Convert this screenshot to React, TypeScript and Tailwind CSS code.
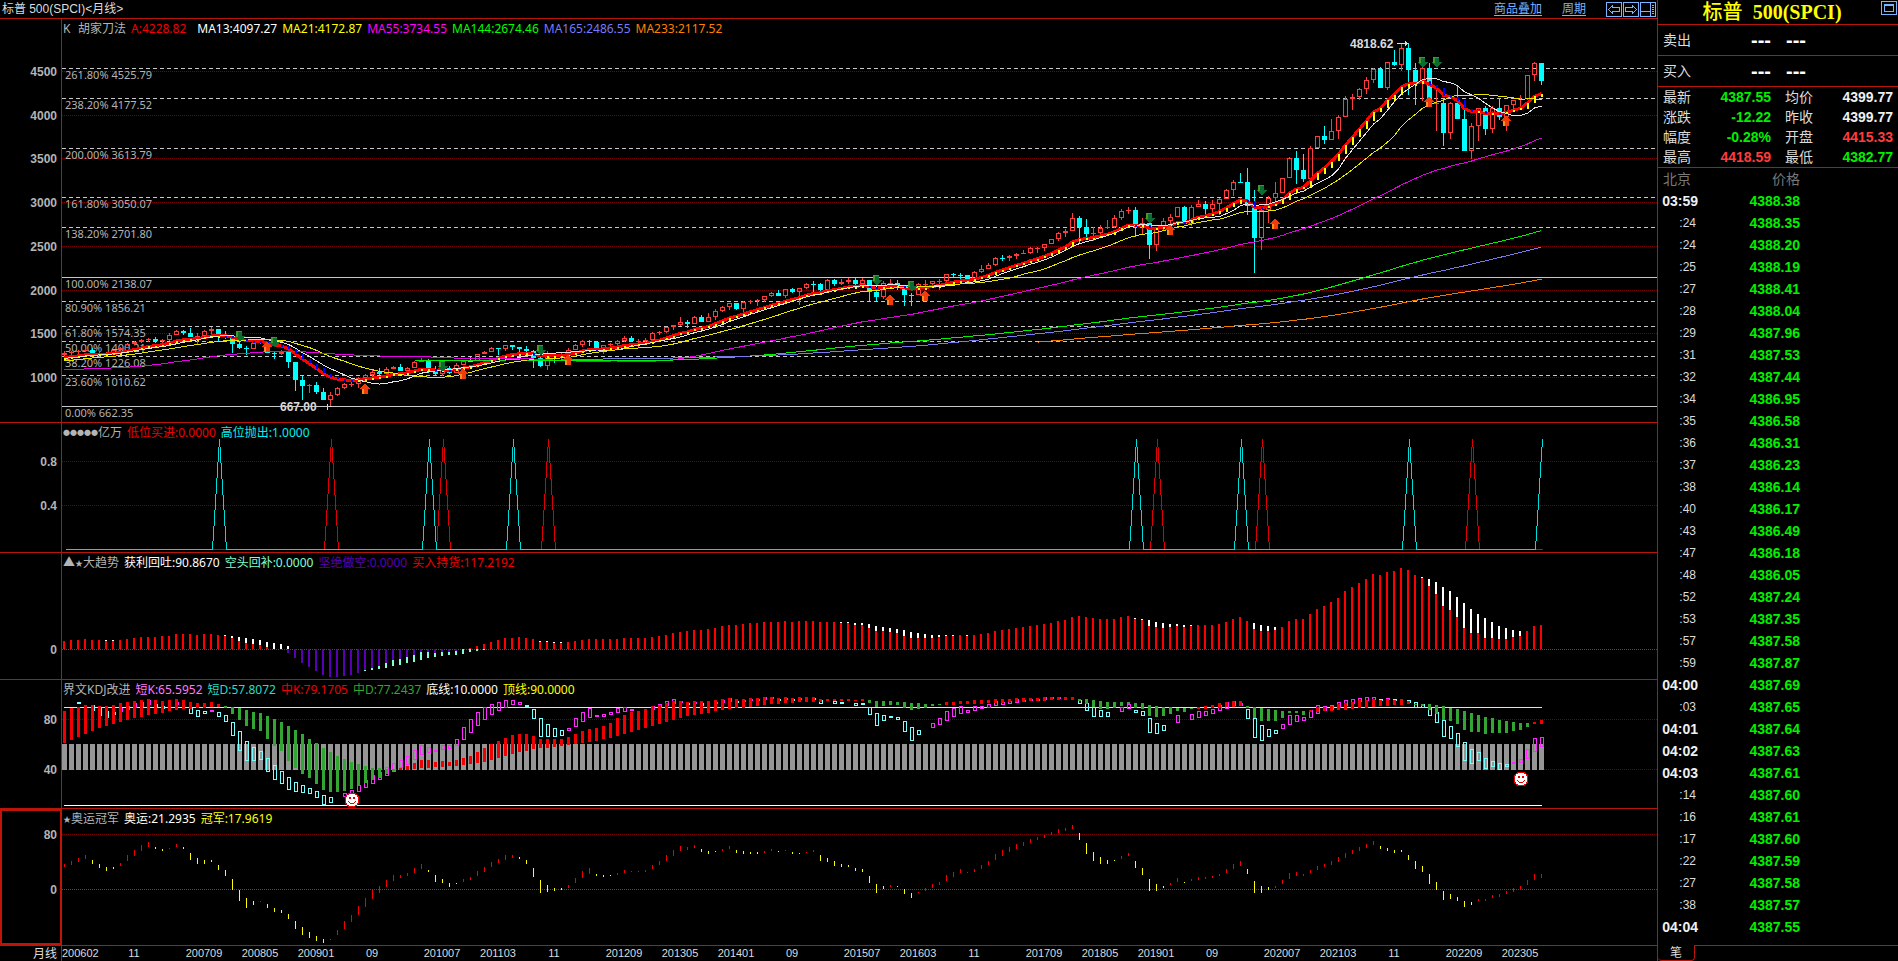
import React from 'react';
import clsx from 'clsx';

type Candle = { o: number; h: number; l: number; c: number };

const STEP = 7;
const FIRST_BAR = 93; // 93 months of history before the first visible bar

// monthly closes 1998-04 .. 2005-12, only used to warm up the averages
const HISTORY = [
  1111.75, 1090.82, 1133.84, 1120.67, 957.28, 1017.01, 1098.67, 1163.63, 1229.23,
  1279.64, 1238.33, 1286.37, 1335.18, 1301.84, 1372.71, 1328.72, 1320.41, 1282.71, 1362.93, 1388.91, 1469.25,
  1394.46, 1366.42, 1498.58, 1452.43, 1420.6, 1454.6, 1430.83, 1517.68, 1436.51, 1429.4, 1314.95, 1320.28,
  1366.01, 1239.94, 1160.33, 1249.46, 1255.82, 1224.42, 1211.23, 1133.58, 1040.94, 1059.78, 1139.45, 1148.08,
  1130.2, 1106.73, 1147.39, 1076.92, 1067.14, 989.82, 911.62, 916.07, 815.28, 885.76, 936.31, 879.82,
  855.7, 841.15, 848.18, 916.92, 963.59, 974.5, 990.31, 1008.01, 995.97, 1050.71, 1058.2, 1111.92,
  1131.13, 1144.94, 1126.21, 1107.3, 1120.68, 1140.84, 1101.72, 1104.24, 1114.58, 1130.2, 1173.82, 1211.92,
  1181.27, 1203.6, 1180.59, 1156.85, 1191.5, 1191.33, 1234.18, 1220.33, 1228.81, 1207.01, 1249.48, 1248.29,
];

// high, low, close for every visible month, one line per half year
const MONTHS = [
  1294.9, 1245.7, 1280.1, 1297.6, 1253.6, 1280.7, 1310.9, 1268.4, 1294.8, 1318.2, 1280.7, 1310.6, 1326.7, 1245.3, 1270.1, 1290.7, 1219.3, 1270.2,
  1280.4, 1224.5, 1276.7, 1306.7, 1261.3, 1303.8, 1340.3, 1290.9, 1335.9, 1389.5, 1327.1, 1377.9, 1407.9, 1361, 1400.6, 1431.8, 1385.9, 1418.3,
  1441.6, 1404, 1438.2, 1461.6, 1389.4, 1406.8, 1438.9, 1364, 1420.9, 1498, 1416.4, 1482.4, 1535.6, 1476.7, 1530.6, 1540.6, 1484.2, 1503.4,
  1555.9, 1454.3, 1455.3, 1503.9, 1370.6, 1474, 1538.7, 1439.3, 1526.8, 1576.1, 1489.6, 1549.4, 1545.8, 1406.1, 1481.1, 1523.6, 1435.7, 1468.4,
  1472, 1270.1, 1378.6, 1396, 1316.8, 1330.6, 1359.7, 1257, 1322.7, 1404.6, 1324.4, 1385.6, 1440.2, 1373.1, 1400.4, 1404.1, 1272, 1280,
  1292.2, 1200.4, 1267.4, 1313.2, 1247.5, 1282.8, 1303, 1106.4, 1166.4, 1167, 839.8, 968.8, 1007.5, 741, 896.2, 918.9, 815.7, 903.3,
  943.9, 804.3, 825.9, 875, 734.5, 735.1, 833, 667, 797.9, 888.7, 783.3, 872.8, 930.2, 866.1, 919.1, 956.2, 888.9, 919.3,
  996.7, 869.3, 987.5, 1039.5, 978.5, 1020.6, 1080.2, 992, 1057.1, 1101.4, 1020, 1036.2, 1113.7, 1029.4, 1095.6, 1130.4, 1085.9, 1115.1,
  1150.5, 1071.6, 1073.9, 1112.4, 1044.5, 1104.5, 1180.7, 1105.4, 1169.4, 1219.8, 1170.7, 1186.7, 1205.1, 1040.8, 1089.4, 1131.2, 1028.3, 1030.7,
  1121, 1010.9, 1101.6, 1129.2, 1039.7, 1049.3, 1157.2, 1049.7, 1141.2, 1196.1, 1131.9, 1183.3, 1227.1, 1173, 1180.6, 1262.6, 1186.6, 1257.6,
  1302.7, 1257.6, 1286.1, 1344.1, 1289.1, 1327.2, 1332.3, 1249.1, 1325.8, 1364.6, 1294.7, 1363.6, 1370.6, 1311.8, 1345.2, 1345.2, 1258.1, 1320.6,
  1356.5, 1282.9, 1292.3, 1307.4, 1101.5, 1218.9, 1229.3, 1114.2, 1131.4, 1292.7, 1074.8, 1253.3, 1277.6, 1158.7, 1247, 1269.4, 1202.4, 1257.6,
  1333.5, 1258.9, 1312.4, 1378, 1312.5, 1365.7, 1419.2, 1340, 1408.5, 1422.4, 1357.4, 1397.9, 1415.3, 1292, 1310.3, 1363.5, 1266.7, 1362.2,
  1391.7, 1325.4, 1379.3, 1426.7, 1354.7, 1406.6, 1474.5, 1396.6, 1440.7, 1471, 1403.3, 1412.2, 1434.3, 1343.4, 1416.2, 1448, 1398.1, 1426.2,
  1509.9, 1426.2, 1498.1, 1530.9, 1485, 1514.7, 1570.3, 1501.5, 1569.2, 1597.6, 1536, 1597.6, 1687.2, 1581.3, 1630.7, 1654.2, 1560.3, 1606.3,
  1698.8, 1604.6, 1685.7, 1709.7, 1627.5, 1633, 1729.9, 1633.4, 1681.6, 1775.2, 1646.5, 1756.5, 1813.6, 1746.2, 1805.8, 1849.4, 1768, 1848.4,
  1850.8, 1770.5, 1782.6, 1867.9, 1737.9, 1859.5, 1884, 1834.4, 1872.3, 1897.3, 1814.4, 1884, 1924, 1859.8, 1923.6, 1968.2, 1916, 1960.2,
  1991.4, 1930.7, 1930.7, 2005, 1904.8, 2003.4, 2019.3, 1964, 1972.3, 2018.2, 1820.7, 2018.1, 2075.8, 2001, 2067.6, 2093.6, 1972.6, 2058.9,
  2072.4, 1988.1, 1995, 2119.6, 1980.9, 2104.5, 2117.5, 2039.7, 2067.9, 2125.9, 2048.4, 2085.5, 2134.7, 2067.9, 2107.4, 2130, 2056.3, 2063.1,
  2132.8, 2044, 2103.8, 2112.7, 1867, 1972.2, 2020.9, 1871.9, 1920, 2094.3, 1893.7, 2079.4, 2116.5, 2019.4, 2080.4, 2104.3, 1993.3, 2043.9,
  2038.2, 1812.3, 1940.2, 1963, 1810.1, 1932.2, 2072.2, 1937.1, 2059.7, 2111.1, 2033.8, 2065.3, 2103.5, 2025.9, 2097, 2120.6, 1991.7, 2098.9,
  2177.1, 2074, 2173.6, 2193.8, 2147.6, 2171, 2187.9, 2119.1, 2168.3, 2169.6, 2114.7, 2126.2, 2214.1, 2083.8, 2198.8, 2277.5, 2187.4, 2238.8,
  2301, 2245.1, 2278.9, 2371.5, 2271.7, 2363.6, 2401, 2322.3, 2362.7, 2398.2, 2329, 2384.2, 2418.7, 2352.7, 2411.8, 2453.8, 2405.7, 2423.4,
  2484, 2407.7, 2470.3, 2490.9, 2417.4, 2471.7, 2519.4, 2446.6, 2519.4, 2583, 2520.4, 2575.3, 2657.7, 2557.5, 2647.6, 2695, 2605.5, 2673.6,
  2872.9, 2682.4, 2823.8, 2836, 2532.7, 2713.8, 2801.9, 2585.9, 2640.9, 2717.5, 2553.8, 2648.1, 2742.2, 2594.6, 2705.3, 2791.5, 2692, 2718.4,
  2848, 2699, 2816.3, 2916.5, 2796.3, 2901.5, 2940.9, 2864.1, 2914, 2939.9, 2603.5, 2711.7, 2815.2, 2631.1, 2760.2, 2800.2, 2346.6, 2506.9,
  2709, 2444, 2704.1, 2813.5, 2681.8, 2784.5, 2860.3, 2722.3, 2834.4, 2949.5, 2848.6, 2945.8, 2954.1, 2750.5, 2752.1, 2964.2, 2728.8, 2941.8,
  3028, 2952.2, 2980.4, 3013.6, 2822.1, 2926.5, 3022, 2891.9, 2976.7, 3050.1, 2855.9, 3037.6, 3154.3, 3050.7, 3141, 3247.9, 3070.3, 3230.8,
  3337.8, 3214.6, 3225.5, 3393.5, 2855.8, 2954.2, 3136.7, 2191.9, 2584.6, 2954.9, 2447.5, 2912.4, 3068.7, 2766.6, 3044.3, 3233.1, 2966, 3100.3,
  3280, 3101.2, 3271.1, 3514.8, 3284.5, 3500.3, 3588.1, 3209.5, 3363, 3549.9, 3233.9, 3270, 3646, 3279.7, 3621.6, 3760.2, 3633.4, 3756.1,
  3870.9, 3662.7, 3714.2, 3950.4, 3725.6, 3811.2, 3994.4, 3723.3, 3972.9, 4218.8, 3992.8, 4181.2, 4238, 4056.9, 4204.1, 4302.4, 4164.4, 4297.5,
  4430, 4233.1, 4395.3, 4537.4, 4367.7, 4522.7, 4545.9, 4305.9, 4307.5, 4608.1, 4278.9, 4605.4, 4743.8, 4560, 4567, 4808.9, 4495.1, 4766.2,
  4818.6, 4222.6, 4515.6, 4595.3, 4114.7, 4373.9, 4637.3, 4157.9, 4530.4, 4593.5, 4124.3, 4131.9, 4307.7, 3810.3, 4132.2, 4177.5, 3636.9, 3785.4,
  4140.2, 3721.6, 4130.3, 4325.3, 3954.5, 3955, 4119.3, 3584.1, 3585.6, 3905.4, 3491.6, 3872, 4080.1, 3698.2, 4080.1, 4101, 3764.5, 3839.5,
  4094.2, 3794.3, 4076.6, 4195.4, 3943.1, 3970.2, 4110.8, 3808.9, 4109.3, 4170.1, 4049.4, 4169.5, 4231.1, 4048.3, 4179.8, 4458.5, 4171.6, 4450.4,
  4607.1, 4385, 4589, 4578.8, 4335, 4387.6,
];

const ALL: Candle[] = HISTORY.map((c, i) => ({ o: HISTORY[i - 1] ?? c, h: c, l: c, c }));
for (let i = 0; i < MONTHS.length; i += 3) {
  ALL.push({ o: ALL[ALL.length - 1].c, h: MONTHS[i], l: MONTHS[i + 1], c: MONTHS[i + 2] });
}
const BARS = ALL.slice(FIRST_BAR);
const CLOSES = ALL.map((b) => b.c);

// fast / slow line of the last panel, in pixels above zero (55px = 80)
const OLYMPIC = [
  25, 22, 28, 24, 31, 27, 34, 30, 25, 29, 21, 25, 18, 22, 20, 22, 26, 23, 34, 28, 39, 33, 44, 38, 47, 42, 40, 42, 38, 40, 41, 40,
  45, 42, 40, 42, 29, 36, 25, 31, 25, 29, 27, 29, 19, 24, 13, 19, -1, 10, -12, -1, -19, -9, -16, -12, -12, -13, -19, -15, -23, -19,
  -24, -21, -30, -25, -40, -32, -46, -38, -49, -43, -52, -47, -54, -50, -50, -51, -41, -46, -32, -40, -26, -33, -17, -26, -9, -18,
  -1, -10, 3, -4, 9, 2, 14, 8, 14, 11, 16, 13, 21, 16, 25, 20, 17, 19, 7, 14, 6, 10, 2, 6, 5, 6, 10, 7, 12, 9, 18, 13, 22, 17,
  27, 22, 30, 26, 34, 29, 34, 31, 30, 32, 25, 29, 12, 21, -4, 9, -3, 4, -2, 1, -1, 1, 4, 1, 11, 6, 18, 11, 21, 15, 13, 15, 12, 14,
  13, 14, 16, 14, 19, 16, 18, 17, 18, 17, 19, 17, 24, 20, 28, 24, 34, 28, 39, 33, 43, 38, 42, 39, 44, 41, 37, 40, 35, 38, 37, 38,
  40, 38, 43, 40, 36, 39, 35, 38, 35, 37, 35, 37, 38, 36, 40, 38, 37, 38, 39, 38, 35, 37, 35, 36, 37, 36, 39, 37, 28, 34, 27, 31,
  23, 28, 22, 25, 22, 24, 18, 21, 17, 20, 6, 13, -4, 5, 0, 3, 4, 2, 2, 3, -5, 0, -9, -4, -3, -4, 1, -2, 5, 1, 7, 4, 14, 8, 17, 12,
  20, 16, 17, 16, 20, 17, 24, 20, 28, 24, 35, 29, 39, 33, 42, 37, 45, 40, 47, 43, 50, 46, 52, 49, 54, 51, 57, 54, 60, 56, 61, 58,
  64, 60, 49, 56, 35, 46, 28, 37, 25, 32, 25, 29, 28, 29, 33, 30, 36, 33, 21, 28, 14, 21, -2, 10, -2, 5, 1, 3, 6, 4, 11, 7, 6, 7,
  10, 8, 12, 9, 12, 10, 13, 11, 15, 13, 20, 16, 25, 20, 28, 23, 15, 20, -4, 8, -4, 3, -1, 2, 3, 1, 9, 5, 16, 10, 17, 13, 15, 13,
  19, 16, 23, 19, 25, 22, 28, 24, 32, 27, 36, 31, 39, 35, 42, 38, 45, 41, 48, 44, 40, 43, 38, 41, 36, 39, 37, 39, 29, 34, 20, 28,
  17, 23, 5, 15, -1, 7, -11, -2, -10, -5, -12, -8, -18, -12, -16, -13, -10, -12, -10, -12, -6, -9, -5, -8, -2, -5, 1, -3, 3, -1,
  9, 4, 15, 9, 15, 11,
];

function ma(n: number) {
  return CLOSES.map((_, i) => (i < n - 1 ? NaN : CLOSES.slice(i - n + 1, i + 1).reduce((a, b) => a + b, 0) / n));
}

// x = (src + (n - 1) * prev) / n
function smooth(src: number[], n: number) {
  const out: number[] = [];
  src.forEach((v, i) => out.push(i === 0 ? v : out[i - 1] + (v - out[i - 1]) / n));
  return out;
}

function kd(n: number, m1: number, m2: number) {
  const rsv = ALL.map((b, i) => {
    const win = ALL.slice(Math.max(0, i - n + 1), i + 1);
    const hi = Math.max(...win.map((w) => w.h));
    const lo = Math.min(...win.map((w) => w.l));
    return hi === lo ? 50 : ((b.c - lo) / (hi - lo)) * 100;
  });
  const k = smooth(rsv, m1);
  return { k: k.slice(FIRST_BAR), d: smooth(k, m2).slice(FIRST_BAR) };
}

const MA13 = ma(13).slice(FIRST_BAR);
const MA21 = ma(21).slice(FIRST_BAR);
const MA55 = ma(55).slice(FIRST_BAR);
const MA144 = ma(144).slice(FIRST_BAR);
const MA165 = ma(165).slice(FIRST_BAR);
const MA233 = ma(233).slice(FIRST_BAR);
const LINE_A = smooth(CLOSES, 6);

const ema12 = smooth(CLOSES, 6.5);
const ema26 = smooth(CLOSES, 13.5);
const difAll = ema12.map((v, i) => v - ema26[i]);
const DIF = difAll.slice(FIRST_BAR);
const DEA = smooth(difAll, 5).slice(FIRST_BAR);

const SHORT = kd(25, 3, 3);
const MID = kd(55, 5, 10);

const FIB: [string, number][] = [
  ['261.80% 4525.79', 4525.79],
  ['238.20% 4177.52', 4177.52],
  ['200.00% 3613.79', 3613.79],
  ['161.80% 3050.07', 3050.07],
  ['138.20% 2701.80', 2701.8],
  ['100.00% 2138.07', 2138.07],
  ['80.90% 1856.21', 1856.21],
  ['61.80% 1574.35', 1574.35],
  ['50.00% 1400.21', 1400.21],
  ['38.20% 1226.08', 1226.08],
  ['23.60% 1010.62', 1010.62],
  ['0.00% 662.35', 662.35],
];

// [bar, top of the arrow]
const SELLS = [[25, 312], [30, 318], [54, 342], [68, 326], [116, 256], [121, 262], [155, 194], [171, 166], [194, 38], [196, 38]];
const BUYS = [[29, 322], [43, 364], [57, 349], [72, 335], [118, 275], [123, 271], [158, 205], [173, 199], [195, 77], [206, 96]];

const PEAKS_HIGH = [22, 52, 64, 153, 168, 192, 211];
const PEAKS_LOW = [38, 54, 69, 156, 171, 201];

const DATES: [number, string][] = [
  [10, '11'], [20, '200709'], [28, '200805'], [36, '200901'], [44, '09'], [54, '201007'], [62, '201103'], [70, '11'],
  [80, '201209'], [88, '201305'], [96, '201401'], [104, '09'], [114, '201507'], [122, '201603'], [130, '11'],
  [140, '201709'], [148, '201805'], [156, '201901'], [164, '09'], [174, '202007'], [182, '202103'], [190, '11'],
  [200, '202209'], [208, '202305'],
];

const STATS = [
  ['最新', '4387.55', 'g', '均价', '4399.77', 'w'],
  ['涨跌', '-12.22', 'g', '昨收', '4399.77', 'w'],
  ['幅度', '-0.28%', 'g', '开盘', '4415.33', 'r'],
  ['最高', '4418.59', 'r', '最低', '4382.77', 'g'],
];

const TICKS = [
  ['03:59', '4388.38'], [':24', '4388.35'], [':24', '4388.20'], [':25', '4388.19'], [':27', '4388.41'], [':28', '4388.04'],
  [':29', '4387.96'], [':31', '4387.53'], [':32', '4387.44'], [':34', '4386.95'], [':35', '4386.58'], [':36', '4386.31'],
  [':37', '4386.23'], [':38', '4386.14'], [':40', '4386.17'], [':43', '4386.49'], [':47', '4386.18'], [':48', '4386.05'],
  [':52', '4387.24'], [':53', '4387.35'], [':57', '4387.58'], [':59', '4387.87'], ['04:00', '4387.69'], [':03', '4387.65'],
  ['04:01', '4387.64'], ['04:02', '4387.63'], ['04:03', '4387.61'], [':14', '4387.60'], [':16', '4387.61'], [':17', '4387.60'],
  [':22', '4387.59'], [':27', '4387.58'], [':38', '4387.57'], ['04:04', '4387.55'],
];

const priceY = (p: number) => 358 - (p - 1000) * 0.08743;
const kdY = (v: number) => Math.round(125 - (v - 10) * 1.225);
const barX = (i: number) => i * STEP;

function linePoints(values: number[]) {
  return values
    .map((v, i) => (Number.isNaN(v) ? '' : `${barX(i) + 2.5},${priceY(v).toFixed(1)}`))
    .filter(Boolean)
    .join(' ');
}

type Tick = { y: number; label: string };

type PanelProps = {
  height: string;
  ticks: Tick[];
  selected?: boolean;
  brightZero?: boolean;
  legend: React.ReactNode;
  children: React.ReactNode;
};

function Panel({ height, ticks, selected, brightZero, legend, children }: PanelProps) {
  return (
    <section className={clsx('flex border-b border-[#b9140a]', height)}>
      <div className={clsx('w-[62px] shrink-0', selected ? 'border-2 border-[#c01408]' : 'border-r border-[#b9140a]')}>
        <svg className="block w-full h-full overflow-visible">
          {ticks.map((t) => (
            <text
              key={t.label}
              x={selected ? 55 : 57}
              y={selected ? t.y + 3 : t.y + 5}
              textAnchor="end"
              className="fill-[#b4b4b4] font-bold text-xs font-['Liberation_Sans',sans-serif]"
            >
              {t.label}
            </text>
          ))}
        </svg>
      </div>
      <div className="relative flex-1 min-w-0">
        <svg className="block w-full h-full" shapeRendering="crispEdges">
          {ticks.map((t) => (
            <line
              key={t.label}
              x1="0"
              x2="100%"
              y1={t.y + 0.5}
              y2={t.y + 0.5}
              stroke={brightZero && t.label === '0' ? '#be1e14' : '#780000'}
              strokeDasharray="1 1"
            />
          ))}
          {children}
        </svg>
        <div className="absolute left-0 top-0 h-5 pl-px flex items-center gap-[5px] text-xs whitespace-nowrap">
          {legend}
        </div>
      </div>
    </section>
  );
}

function SellArrow({ bar, y }: { bar: number; y: number }) {
  return (
    <g transform={`translate(${barX(bar) - 3} ${y})`}>
      <path d="M2 0h6v5h3l-5 5-6-5h2z" fill="#0a6e32" />
      <path d="M2 0h6v1H4v5H2z" fill="#4b9628" />
    </g>
  );
}

function BuyArrow({ bar, y }: { bar: number; y: number }) {
  return (
    <g transform={`translate(${barX(bar) - 3} ${y})`}>
      <path d="M5 0l5 6H8v5H2V6H0z" fill="#f03c0a" />
      <path d="M2 6h2v5H2z" fill="#ff8c1e" />
    </g>
  );
}

function Smiley({ bar, y }: { bar: number; y: number }) {
  return (
    <g transform={`translate(${barX(bar) + 3} ${y})`}>
      <circle r="7" fill="#fff" stroke="#f00000" />
      <path d="M-3-3h2v2h-2zM1-3h2v2H1z" fill="#e00000" />
      <path d="M-4 1l2 2h4l2-2" fill="none" stroke="#e00000" />
    </g>
  );
}

function PriceChart() {
  return (
    <>
      {FIB.map(([label, p]) => {
        const y = Math.floor(priceY(p) - 0.4) + 0.5;
        const solid = label.startsWith('100') || label.startsWith('0.00');
        return (
          <g key={label}>
            <text x="3" y={y + 10} className="fill-[#b4b4b4] text-[11px]">
              {label}
            </text>
            {label.startsWith('0.00') && (
              <text x="218" y={y + 4} className="fill-[#dcdcdc] text-xs font-bold font-['Liberation_Sans',sans-serif]">
                667.00
              </text>
            )}
            <line x1="0" x2="100%" y1={y} y2={y} stroke="#c8c8c8" strokeDasharray={solid ? undefined : '4 3'} />
          </g>
        );
      })}
      <path d="M265.5 385v2M266.5 387.5h3M265.5 388v3" stroke="#dcdcdc" fill="none" />
      <text x="1288" y="29" className="fill-[#dcdcdc] text-xs font-bold font-['Liberation_Sans',sans-serif]">
        4818.62
      </text>
      <path d="M1335 24.5h11M1343.5 22v5M1344.5 23v3" stroke="#dcdcdc" fill="none" />

      {BARS.map((b, i) => {
        const x = barX(i);
        const up = b.c >= b.o;
        const top = Math.round(priceY(Math.max(b.o, b.c)));
        const bottom = Math.max(top + 1, Math.round(priceY(Math.min(b.o, b.c))));
        const high = Math.round(priceY(b.h));
        const low = Math.max(bottom, Math.round(priceY(b.l)));
        const color = up ? '#ff3c3c' : '#00ffff';
        return (
          <g key={i} fill={color}>
            <rect x={x + 2} y={high} width="1" height={Math.max(0, top - high)} />
            <rect x={x + 2} y={bottom} width="1" height={low - bottom} />
            {up && bottom - top > 2 ? (
              <rect x={x + 0.5} y={top + 0.5} width="4" height={bottom - top - 1} fill="none" stroke={color} />
            ) : (
              <rect x={x} y={top} width="5" height={bottom - top} />
            )}
          </g>
        );
      })}

      <g fill="none">
        <polyline points={linePoints(LINE_A.slice(FIRST_BAR))} stroke="#ff0000" strokeWidth="3" />
        <polyline points={linePoints(MA13)} stroke="#e6e6e6" />
        <polyline points={linePoints(MA21)} stroke="#e6e600" />
        <polyline points={linePoints(MA55)} stroke="#e600e6" />
        <polyline points={linePoints(MA144)} stroke="#00f000" />
        <polyline points={linePoints(MA165)} stroke="#7878f0" />
        <polyline points={linePoints(MA233)} stroke="#f07800" />
      </g>
      {BARS.map((_, i) => {
        const now = LINE_A[FIRST_BAR + i];
        const prev = LINE_A[FIRST_BAR + i - 1];
        const y1 = priceY(Math.max(now, prev));
        const y2 = priceY(Math.min(now, prev));
        return (
          <rect
            key={i}
            x={barX(i) + 2}
            y={Math.round(y1)}
            width="2"
            height={Math.max(2, Math.round(y2 - y1))}
            fill={now > prev ? '#ffff00' : '#0000ff'}
          />
        );
      })}
      {BUYS.map(([bar, y]) => (
        <BuyArrow key={bar} bar={bar} y={y} />
      ))}
      {SELLS.map(([bar, y]) => (
        <SellArrow key={bar} bar={bar} y={y} />
      ))}
    </>
  );
}

function spikes(bars: number[]) {
  const points = BARS.map((_, i) => `${barX(i) + 3.5},${bars.includes(i) ? 16 : 126.5}`);
  return points.join(' ');
}

function SignalChart() {
  return (
    <g fill="none">
      <polyline points={spikes(PEAKS_LOW)} stroke="#dc0000" />
      <polyline points={spikes(PEAKS_HIGH)} stroke="#00dcdc" />
    </g>
  );
}

function TrendChart() {
  const zero = 96;
  const y = (v: number) => Math.round(zero - v * 0.19);
  const bar = (i: number, a: number, b: number, fill: string) => (
    <rect x={barX(i) + 1} y={Math.min(y(a), y(b))} width="2" height={Math.abs(y(a) - y(b))} fill={fill} />
  );
  return (
    <>
      {BARS.map((_, i) => {
        const f = DIF[i];
        const s = DEA[i];
        return (
          <g key={i}>
            {bar(i, 0, f, f > 0 ? '#ff0000' : '#5a00b4')}
            {s > 0 && s > f && bar(i, Math.max(f, 0), s, '#ffffff')}
            {s < 0 && s < f && bar(i, Math.min(f, 0), s, '#7fffd4')}
          </g>
        );
      })}
    </>
  );
}

function KdjChart() {
  const end = barX(BARS.length - 1) + 3;
  return (
    <>
      {BARS.map((_, i) => (
        <rect key={i} x={barX(i)} y="64" width="5" height="26" fill="#969696" />
      ))}
      <line x1="2" x2={end} y1="27.5" y2="27.5" stroke="#ffff00" />
      <line x1="2" x2={end} y1="125.5" y2="125.5" stroke="#ffffff" />
      {BARS.map((_, i) => {
        const k = kdY(SHORT.k[i]);
        const d = kdY(SHORT.d[i]);
        const mk = kdY(MID.k[i]);
        const md = kdY(MID.d[i]);
        return (
          <g key={i}>
            <rect
              x={barX(i) + 1.5}
              y={Math.min(k, d) + 0.5}
              width="3"
              height={Math.abs(k - d)}
              fill="none"
              stroke={SHORT.k[i] > SHORT.d[i] ? '#ff28ff' : '#78ffff'}
            />
            <rect
              x={barX(i) + 1}
              y={Math.min(mk, md)}
              width="3"
              height={Math.abs(mk - md) + 1}
              fill={MID.k[i] > MID.d[i] ? '#f00000' : '#32a532'}
            />
          </g>
        );
      })}
      <Smiley bar={41} y={120} />
      <Smiley bar={208} y={99} />
    </>
  );
}

function OlympicChart() {
  return (
    <>
      {BARS.map((_, i) => {
        const fast = OLYMPIC[i * 2];
        const slow = OLYMPIC[i * 2 + 1];
        return (
          <rect
            key={i}
            x={barX(i) + 2}
            y={80 - Math.max(fast, slow)}
            width="1"
            height={Math.abs(fast - slow)}
            fill={fast > slow ? '#f00000' : '#ffff00'}
          />
        );
      })}
    </>
  );
}

const tone = (t: string) => (t === 'g' ? 'text-[#00f000]' : t === 'r' ? 'text-[#ff3c3c]' : 'text-[#f0f0f0]');

function Sidebar() {
  return (
    <aside className="w-[241px] shrink-0 flex flex-col border-l border-[#b9140a] text-sm text-[#dcdcdc]">
      <div className="relative h-[25px] shrink-0 border-b border-[#b9140a] flex items-center justify-center">
        <h1 className="text-xl leading-6 font-medium text-[#ffff00] whitespace-pre pr-3">
          标普 <span className="font-['Liberation_Serif',serif] font-bold"> 500(SPCI)</span>
        </h1>
        <button className="absolute right-px top-px" aria-label="还原窗口">
          <svg width="16" height="15" fill="none" stroke="#78b4ff" shapeRendering="crispEdges" className="block">
            <rect x="0.5" y="0.5" width="15" height="13" />
            <rect x="3.5" y="3.5" width="9" height="7" />
            <path d="M3 4.5h10" />
          </svg>
        </button>
      </div>
      {['卖出', '买入'].map((name) => (
        <div key={name} className="h-[31px] shrink-0 border-b border-[#b9140a] flex items-center pl-[5px] leading-[30px]">
          <span className="w-[88px]">{name}</span>
          <span className="w-[35px] text-xl leading-[30px] font-bold text-white font-['Liberation_Sans',sans-serif]">---</span>
          <span className="text-xl leading-[30px] font-bold text-white font-['Liberation_Sans',sans-serif]">---</span>
        </div>
      ))}
      <dl className="shrink-0 border-b border-[#b9140a]">
        {STATS.map(([a, av, at, b, bv, bt]) => (
          <div key={a} className="flex h-5 leading-5 pl-[5px] pr-[5px]">
            <dt className="w-8">{a}</dt>
            <dd className={clsx("w-[76px] text-right font-bold font-['Liberation_Sans',sans-serif]", tone(at))}>{av}</dd>
            <dt className="w-8 ml-3.5">{b}</dt>
            <dd className={clsx("flex-1 text-right font-bold font-['Liberation_Sans',sans-serif]", tone(bt))}>{bv}</dd>
          </div>
        ))}
      </dl>
      <table className="w-[142px] table-fixed border-collapse">
        <thead>
          <tr className="h-[22px] text-[#787878]">
            <th className="w-10 p-0 pl-[5px] font-normal text-left leading-[22px]">北京</th>
            <th className="p-0 font-normal text-right leading-[22px]">价格</th>
          </tr>
        </thead>
        <tbody className="font-['Liberation_Sans',sans-serif]">
          {TICKS.map(([time, price], i) => (
            <tr key={i} className="h-[22px] leading-[22px]">
              <td className={clsx('p-0 text-right', time.length > 3 ? 'font-bold text-[#f0f0f0]' : 'pr-0.5 text-xs leading-[22px]')}>
                {time}
              </td>
              <td className="p-0 text-right font-bold text-[#00f000]">{price}</td>
            </tr>
          ))}
        </tbody>
      </table>
      <div className="mt-auto flex h-4 shrink-0">
        <button className="w-[37px] border-r border-b border-[#b9140a] rounded-b-sm text-xs leading-[14px]">笔</button>
        <div className="flex-1 border-t border-[#b9140a]" />
      </div>
    </aside>
  );
}

export default function App() {
  return (
    <div className="flex min-h-screen bg-black text-[#b4b4b4] font-['Noto_Sans','Noto_Sans_CJK_SC',sans-serif]">
      <main className="flex-1 min-w-0 flex flex-col">
        <header className="h-[19px] shrink-0 border-b border-[#b9140a] flex items-center pl-0.5 text-xs text-[#dcdcdc]">
          <h2 className="whitespace-pre">
            标普 <span className="font-['Liberation_Sans',sans-serif]">500(SPCI)&lt;</span>月线
            <span className="font-['Liberation_Sans',sans-serif]">&gt;</span>
          </h2>
          <nav className="ml-auto mr-px flex items-center gap-5 text-[#78b4ff]">
            <a href="#overlay" className="underline underline-offset-2">
              商品叠加
            </a>
            <a href="#period" className="underline underline-offset-2">
              周期
            </a>
            <div className="flex gap-px">
              <button aria-label="上一个">
                <svg width="16" height="15" fill="none" stroke="#78b4ff" className="block" shapeRendering="crispEdges">
                  <rect x="0.5" y="0.5" width="15" height="14" />
                  <path d="M2.5 7.5l4-4v2h7v4h-7v2z" />
                </svg>
              </button>
              <button aria-label="下一个">
                <svg width="16" height="15" fill="none" stroke="#78b4ff" className="block" shapeRendering="crispEdges">
                  <rect x="0.5" y="0.5" width="15" height="14" />
                  <path d="M13.5 7.5l-4-4v2h-7v4h7v2z" />
                </svg>
              </button>
              <button aria-label="窗口布局">
                <svg width="16" height="15" fill="none" stroke="#78b4ff" className="block" shapeRendering="crispEdges">
                  <rect x="0.5" y="0.5" width="15" height="14" />
                  <path d="M10.5 0v15M0 9.5h10M12 3.5h2M12 5.5h2M12 7.5h2M12 9.5h2M12 11.5h2" />
                </svg>
              </button>
            </div>
          </nav>
        </header>

        <Panel
          height="h-[404px]"
          ticks={[4500, 4000, 3500, 3000, 2500, 2000, 1500, 1000].map((p) => ({ y: Math.round(priceY(p)), label: String(p) }))}
          legend={
            <>
              <span className="w-2.5">K</span>
              <span>胡家刀法</span>
              <span className="text-[#f00000] mr-1.5">A:4228.82</span>
              <span className="text-white">MA13:4097.27</span>
              <span className="text-[#ffff00]">MA21:4172.87</span>
              <span className="text-[#ff00ff]">MA55:3734.55</span>
              <span className="text-[#00ff00]">MA144:2674.46</span>
              <span className="text-[#7878ff]">MA165:2486.55</span>
              <span className="text-[#ff8000]">MA233:2117.52</span>
            </>
          }
        >
          <PriceChart />
        </Panel>

        <Panel
          height="h-[130px]"
          ticks={[
            { y: 38, label: '0.8' },
            { y: 82, label: '0.4' },
          ]}
          legend={
            <>
              <span className="flex items-center">
                <span className="text-[7px]">●●●●●</span>亿万
              </span>
              <span className="text-[#f00000]">低位买进:0.0000</span>
              <span className="text-[#00f0f0]">高位抛出:1.0000</span>
            </>
          }
        >
          <SignalChart />
        </Panel>

        <Panel
          height="h-[127px]"
          ticks={[{ y: 96, label: '0' }]}
          brightZero
          legend={
            <>
              <span className="flex items-center">
                ▲<span className="text-[8px]">★</span>大趋势
              </span>
              <span className="text-white">获利回吐:90.8670</span>
              <span className="text-[#7fffd4]">空头回补:0.0000</span>
              <span className="text-[#5a00b4]">坚绝做空:0.0000</span>
              <span className="text-[#f00000]">买入持货:117.2192</span>
            </>
          }
        >
          <TrendChart />
        </Panel>

        <Panel
          height="h-[129px]"
          ticks={[
            { y: 39, label: '80' },
            { y: 89, label: '40' },
          ]}
          legend={
            <>
              <span>界文KDJ改进</span>
              <span className="text-[#ff78ff]">短K:65.5952</span>
              <span className="text-[#28dcc8]">短D:57.8072</span>
              <span className="text-[#f00000]">中K:79.1705</span>
              <span className="text-[#32a532]">中D:77.2437</span>
              <span className="text-white">底线:10.0000</span>
              <span className="text-[#ffff00]">顶线:90.0000</span>
            </>
          }
        >
          <KdjChart />
        </Panel>

        <Panel
          height="h-[137px]"
          selected
          ticks={[
            { y: 25, label: '80' },
            { y: 80, label: '0' },
          ]}
          brightZero
          legend={
            <>
              <span className="flex items-center">
                <span className="text-[8px]">★</span>奥运冠军
              </span>
              <span className="text-white">奥运:21.2935</span>
              <span className="text-[#ffff00]">冠军:17.9619</span>
            </>
          }
        >
          <OlympicChart />
        </Panel>

        <footer className="flex h-[15px] text-xs leading-[15px] text-[#dcdcdc]">
          <div className="w-[62px] shrink-0 border-r border-[#b9140a] pr-1 text-right">月线</div>
          <svg className="block flex-1 min-w-0 h-[15px] font-['Liberation_Sans',sans-serif] text-[11px] fill-[#dcdcdc]">
            <text x="0" y="11">
              200602
            </text>
            {DATES.map(([bar, label]) => (
              <text key={bar} x={barX(bar) + 2} y="11" textAnchor="middle">
                {label}
              </text>
            ))}
          </svg>
        </footer>
      </main>
      <Sidebar />
    </div>
  );
}
